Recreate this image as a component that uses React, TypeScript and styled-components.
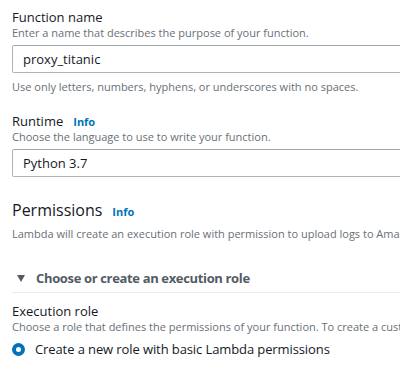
import React from 'react';
import styled, {createGlobalStyle} from 'styled-components';

const GlobalStyle = createGlobalStyle`
  html, body {
    margin: 0;
    padding: 0;
    background: #FFFFFF;
    overflow: hidden;
  }
  body {
    font-family: "Open Sans", "Noto Sans", sans-serif;
    color: #16191F;
  }
`;

const Page = styled.div`
  width: 400px;
  height: 365px;
  overflow: hidden;
  padding: 9px 0 0 12px;
  box-sizing: border-box;
  white-space: nowrap;
`;

const Field = styled.div<{top?: number}>`
  display: flex;
  flex-direction: column;
  margin-top: ${p => p.top ?? 0}px;
`;

const LabelRow = styled.div`
  display: flex;
  align-items: baseline;
  gap: 10px;
`;

const Label = styled.span`
  font-size: 13px;
  line-height: 16px;
  color: #16191F;
`;

const InfoLink = styled.a`
  font-size: 11px;
  font-weight: 700;
  color: #0073BB;
  text-decoration: none;
`;

const Description = styled.div<{top?: number}>`
  font-size: 11px;
  line-height: 15px;
  color: #687078;
  margin-top: ${p => p.top ?? 0}px;
`;

const Input = styled.div`
  margin-top: 5px;
  width: 420px;
  height: 28px;
  box-sizing: border-box;
  border: 1px solid #AAB7B8;
  border-top-color: #9AA7A8;
  border-radius: 2px;
  padding: 0 10px;
  display: flex;
  align-items: center;
  font-size: 13px;
  color: #16191F;
`;

const SectionHeader = styled.div`
  display: flex;
  align-items: baseline;
  gap: 10px;
  margin-top: 23px;
`;

const SectionTitle = styled.span`
  font-size: 16px;
  line-height: 20px;
  color: #16191F;
`;

const Expander = styled.div`
  margin-top: 29px;
  display: flex;
  align-items: center;
  gap: 11px;
  padding: 0 0 6px 5px;
  border-bottom: 1px solid #EAEDED;
  font-size: 13px;
  line-height: 16px;
  font-weight: 700;
  letter-spacing: -0.35px;
  color: #545B64;
`;

const Caret = styled.span`
  width: 0;
  height: 0;
  border-left: 4px solid transparent;
  border-right: 4px solid transparent;
  border-top: 7px solid #545B64;
`;

const RadioRow = styled.label`
  margin-top: 7px;
  display: flex;
  align-items: center;
  gap: 10px;
  font-size: 13px;
  line-height: 16px;
  letter-spacing: -0.1px;
  color: #16191F;
`;

const RadioDot = styled.span`
  width: 13px;
  height: 13px;
  box-sizing: border-box;
  border-radius: 50%;
  border: 4px solid #0073BB;
  background: #FFFFFF;
`;

export default function App() {
  return (
    <Page>
      <GlobalStyle />
      <Field>
        <Label>Function name</Label>
        <Description>Enter a name that describes the purpose of your function.</Description>
        <Input>proxy_titanic</Input>
        <Description top={6}>Use only letters, numbers, hyphens, or underscores with no spaces.</Description>
      </Field>

      <Field top={19}>
        <LabelRow>
          <Label>Runtime</Label>
          <InfoLink>Info</InfoLink>
        </LabelRow>
        <Description>Choose the language to use to write your function.</Description>
        <Input>Python 3.7</Input>
      </Field>

      <SectionHeader>
        <SectionTitle>Permissions</SectionTitle>
        <InfoLink>Info</InfoLink>
      </SectionHeader>
      <Description top={6}>
        Lambda will create an execution role with permission to upload logs to Amazon CloudWatch Logs.
      </Description>

      <Expander>
        <Caret />
        Choose or create an execution role
      </Expander>

      <Field top={10}>
        <Label>Execution role</Label>
        <Description>Choose a role that defines the permissions of your function. To create a custom role, go to the IAM console.</Description>
        <RadioRow>
          <RadioDot />
          Create a new role with basic Lambda permissions
        </RadioRow>
      </Field>
    </Page>
  );
}
